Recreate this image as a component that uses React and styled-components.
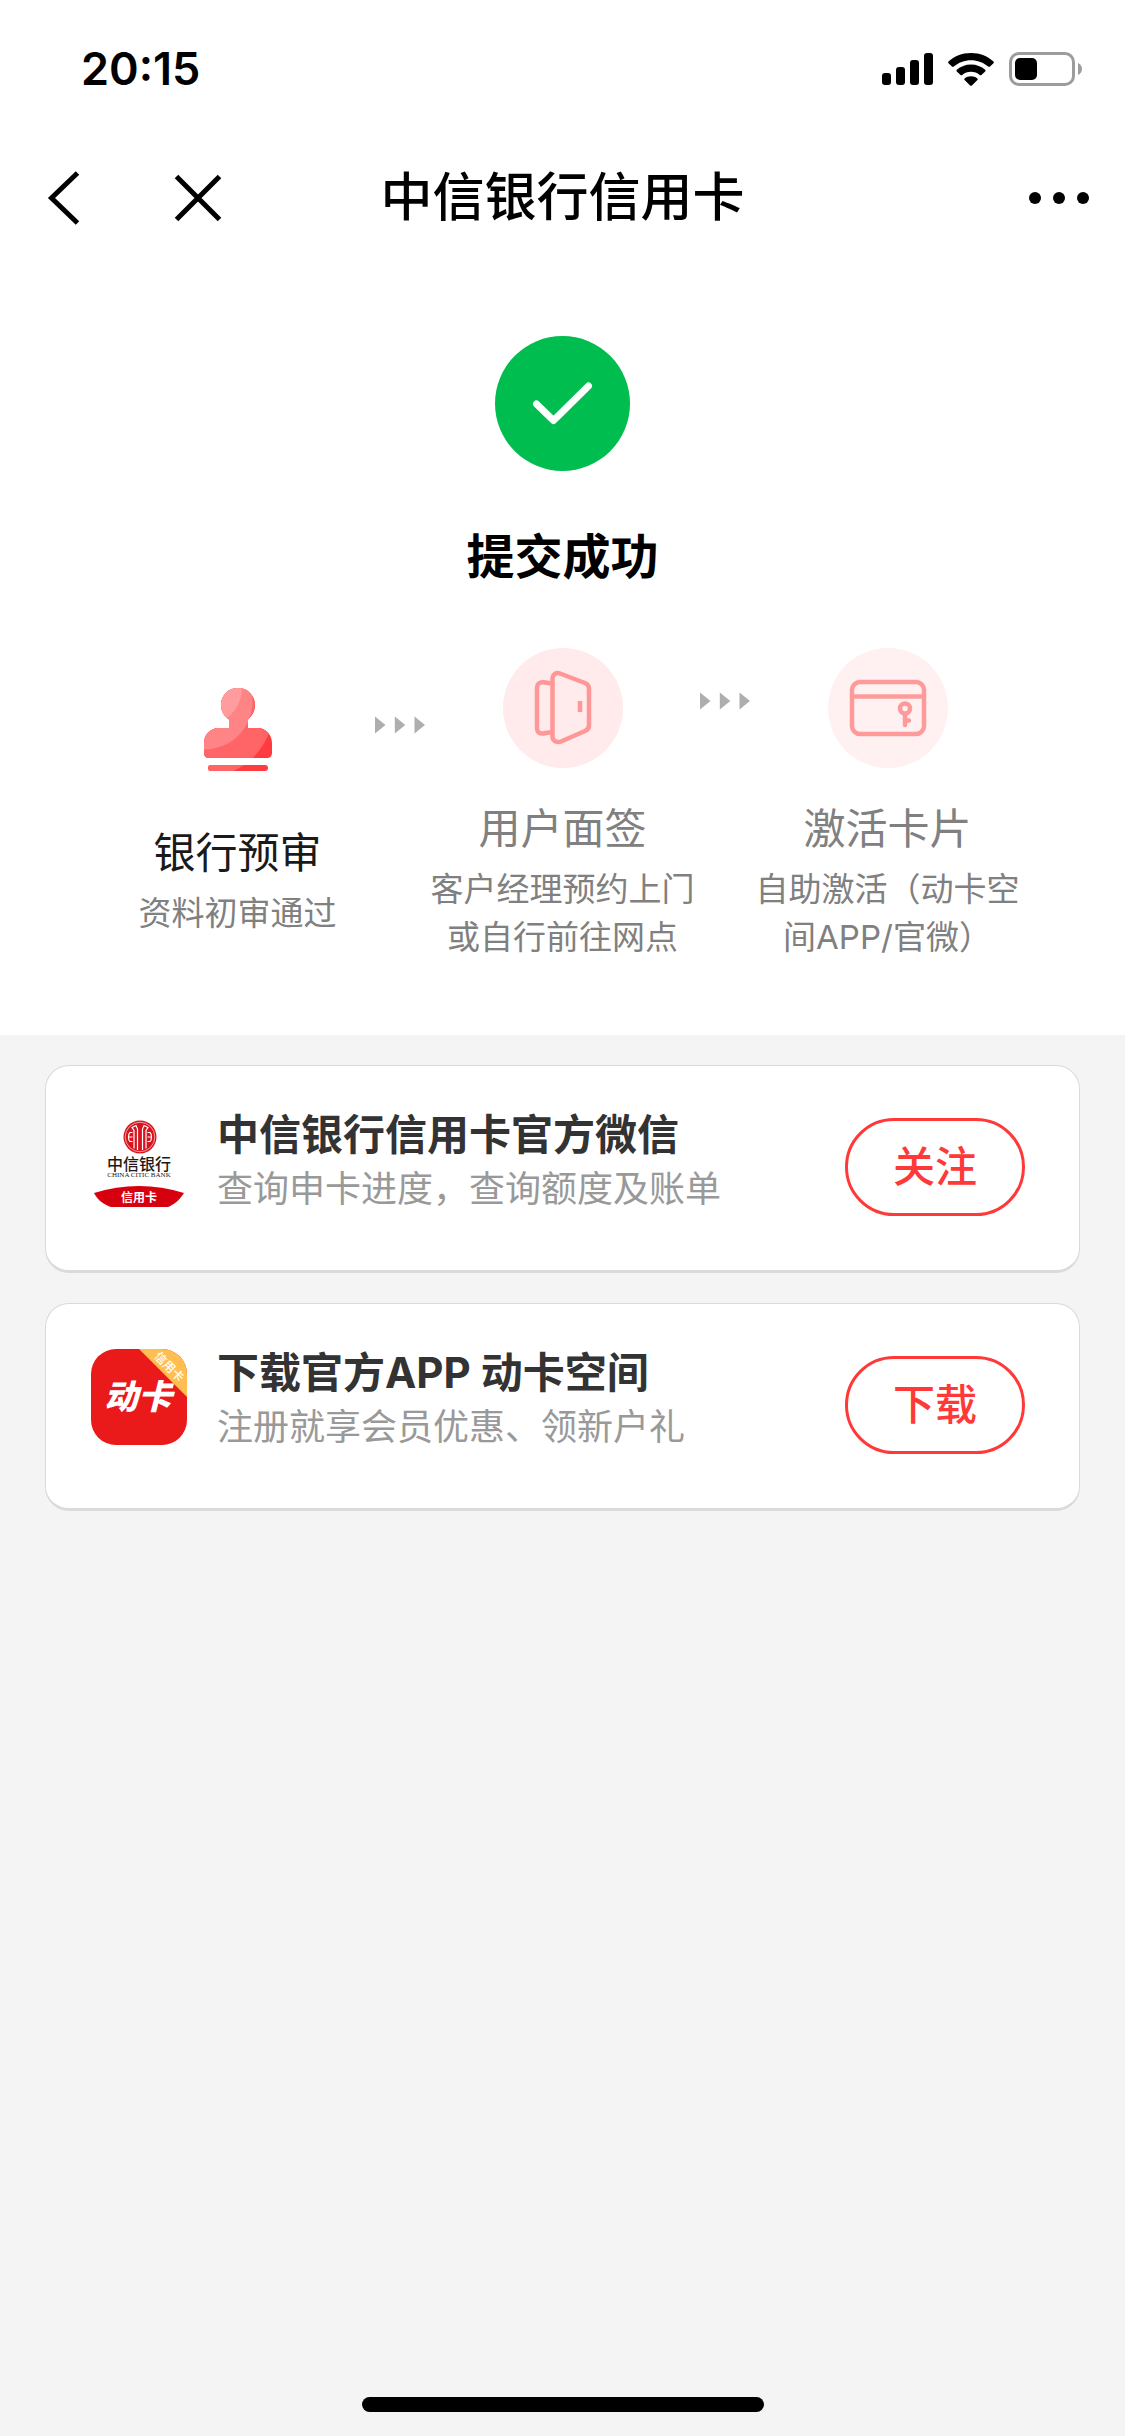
import React from 'react';
import styled, { createGlobalStyle } from 'styled-components';

const GlobalStyle = createGlobalStyle`
    * {
        box-sizing: border-box;
    }
    body {
        margin: 0;
        background-color: #f4f4f4;
        font-family: Inter, "Noto Sans CJK SC", sans-serif;
    }
    h1, h2, h3, p, ul {
        margin: 0;
        padding: 0;
    }
    button {
        font-family: inherit;
        padding: 0;
        background: none;
        border: none;
        cursor: pointer;
    }
    svg {
        display: block;
        flex-shrink: 0;
    }
`

const Page = styled.div`
    display: flex;
    flex-direction: column;
    min-height: 100vh;
`

const StatusBar = styled.div`
    display: flex;
    justify-content: space-between;
    align-items: center;
    height: 138px;
    padding: 0 43px 0 81px;
    background-color: #fff;
`

const Clock = styled.span`
    font-size: 45px;
    line-height: 60px;
    font-weight: 600;
    color: #000;
`

const StatusIcons = styled.div`
    display: flex;
    align-items: center;
    gap: 15px;
`

const NavBar = styled.header`
    display: grid;
    grid-template-columns: 1fr auto 1fr;
    align-items: center;
    height: 120px;
    padding: 0 36px;
    background-color: #fff;
`

const NavActions = styled.div`
    display: flex;
    align-items: center;
    justify-content: ${props => props.$end ? 'flex-end' : 'flex-start'};
    gap: 91px;
`

const NavTitle = styled.h1`
    font-size: 52px;
    line-height: 72px;
    font-weight: 500;
    color: #000;
`

const Result = styled.section`
    display: flex;
    flex-direction: column;
    align-items: center;
    padding: 78px 100px 74px;
    background-color: #fff;
`

const ResultTitle = styled.h2`
    margin-top: 50px;
    font-size: 48px;
    line-height: 72px;
    font-weight: 700;
    color: #000;
`

const Steps = styled.ul`
    display: grid;
    grid-template-columns: 13fr 13fr 11fr;
    align-items: center;
    width: 100%;
    margin-top: 55px;
    list-style: none;
`

const Step = styled.li`
    display: flex;
    align-items: flex-start;
`

const StepBody = styled.div`
    flex: 1;
    display: flex;
    flex-direction: column;
    align-items: center;
    text-align: center;
`

const StepTitle = styled.h3`
    margin-top: 31px;
    font-size: 42px;
    line-height: 60px;
    font-weight: 400;
    color: ${props => props.$active ? '#1a1a1a' : '#808080'};
`

const StepText = styled.p`
    margin-top: 6px;
    font-size: 33px;
    line-height: 48px;
    color: #808080;
`

const StepArrow = styled.div`
    padding-top: 44px;
`

const Cards = styled.main`
    display: flex;
    flex-direction: column;
    gap: 30px;
    padding: 30px 45px;
`

const Card = styled.article`
    display: flex;
    align-items: center;
    gap: 30px;
    padding: 36px 54px 54px 45px;
    background-color: #fff;
    border: 1px solid #dadada;
    border-bottom-width: 3px;
    border-radius: 24px;
`

const CardBody = styled.div`
    flex: 1;
`

const CardTitle = styled.h3`
    font-size: 42px;
    line-height: 60px;
    font-weight: 700;
    color: #333;
`

const CardText = styled.p`
    font-size: 36px;
    line-height: 48px;
    color: #999;
`

const CardButton = styled.button`
    width: 180px;
    height: 98px;
    margin-top: 16px;
    border: 3px solid #ff3838;
    border-radius: 50px;
    font-size: 42px;
    line-height: 60px;
    font-weight: 500;
    color: #ff3838;
`

const HomeIndicator = styled.div`
    width: 402px;
    height: 15px;
    margin: auto auto 24px;
    border-radius: 8px;
    background-color: #000;
`

const IconSignal = () => (
    <svg width="51" height="32" viewBox="0 0 51 32">
        <rect x="0" y="20" width="9" height="12" rx="3" />
        <rect x="14" y="14" width="9" height="18" rx="3" />
        <rect x="28" y="7" width="9" height="25" rx="3" />
        <rect x="42" y="0" width="9" height="32" rx="3" />
    </svg>
)

const IconWifi = () => (
    <svg width="46" height="33" viewBox="0 0 46 35.500" preserveAspectRatio="none">
        <path d="M23 0C32 0 40 3.500 45.500 9.200C46 9.800 46 10.500 45.500 11L42 14.600C41.500 15.100 40.800 15.100 40.200 14.600C35.600 10.300 29.500 7.800 23 7.800S10.400 10.300 5.800 14.600C5.200 15.100 4.500 15.100 4 14.600L0.500 11C0 10.500 0 9.800 0.500 9.200C6 3.500 14 0 23 0Z" />
        <path d="M23 12.300C28.500 12.300 33.400 14.400 37.200 18C37.700 18.500 37.700 19.300 37.200 19.800L33.400 23.600C33 24 32.200 24 31.700 23.600C29.400 21.500 26.300 20.200 23 20.200S16.600 21.500 14.300 23.600C13.800 24 13 24 12.600 23.600L8.800 19.800C8.300 19.300 8.300 18.500 8.800 18C12.600 14.400 17.500 12.300 23 12.300Z" />
        <path d="M23 25C25.500 25 27.700 25.900 29.400 27.400C29.900 27.900 29.900 28.600 29.400 29.100L23.900 34.900C23.400 35.400 22.600 35.400 22.100 34.900L16.600 29.100C16.100 28.600 16.100 27.900 16.600 27.400C18.300 25.900 20.500 25 23 25Z" />
    </svg>
)

const IconBattery = () => (
    <svg width="73" height="34" viewBox="0 0 73 34">
        <rect x="1.500" y="1.500" width="63" height="31" rx="8.500" fill="none" stroke="#9c9c9c" strokeWidth="3" />
        <rect x="6" y="6" width="22" height="22" rx="5" />
        <path d="M69 11C71.500 12 73 14.500 73 17S71.500 22 69 23Z" fill="#9c9c9c" />
    </svg>
)

const IconBack = () => (
    <svg width="46" height="54" viewBox="0 0 46 54">
        <path d="M41.500 2L15.500 27L41.500 52" fill="none" stroke="#000" strokeWidth="5" />
    </svg>
)

const IconClose = () => (
    <svg width="50" height="50" viewBox="0 0 50 50">
        <path d="M3.500 3.500L46.500 46.500M46.500 3.500L3.500 46.500" fill="none" stroke="#000" strokeWidth="5" />
    </svg>
)

const IconMore = () => (
    <svg width="60" height="12" viewBox="0 0 60 12">
        <circle cx="6" cy="6" r="6" />
        <circle cx="30" cy="6" r="6" />
        <circle cx="54" cy="6" r="6" />
    </svg>
)

const IconSuccess = () => (
    <svg width="135" height="135" viewBox="0 0 135 135">
        <circle cx="67.500" cy="67.500" r="67.500" fill="#00bd50" />
        <path d="M41.500 68L58.500 84.500L93.500 50" fill="none" stroke="#fff" strokeWidth="7" strokeLinecap="round" strokeLinejoin="round" />
    </svg>
)

const IconStamp = () => (
    <svg width="120" height="120" viewBox="0 0 120 120">
        <clipPath id="stamp">
            <path d="M60 16C69.500 16 77 23.500 77 33C77 39 74 44 70 47.500V56H80C88 56 94 63 94 71V81C94 84 92 86 89 86H31C28 86 26 84 26 81V71C26 63 32 56 41 56H51V47.500C46 44 43 39 43 33C43 23.500 50.500 16 60 16Z" />
            <rect x="30" y="93" width="60" height="6" rx="3" />
        </clipPath>
        <g clipPath="url(#stamp)">
            <rect width="120" height="120" fill="#ff3b3f" />
            <circle cx="26.500" cy="36.500" r="69" fill="#ff6467" />
            <circle cx="26.500" cy="29.500" r="48" fill="#ff8486" />
            <circle cx="26" cy="16" r="38" fill="#ff9c9d" />
        </g>
    </svg>
)

const IconDoor = () => (
    <svg width="120" height="120" viewBox="0 0 120 120">
        <circle cx="60" cy="60" r="60" fill="#ffebeb" />
        <g fill="none" stroke="#ff9697" strokeWidth="4.500">
            <path d="M49.500 31C49.500 26.500 53 24 57 25.500L82 35C85 36.200 86 38 86 41V77C86 80 85 81.800 82 83L58 93.500C54 95.200 49.500 93 49.500 88.500Z" />
            <path d="M49 35.500L40.500 34.200C36.500 33.800 34 36 34 39.500V80C34 84 36.500 86 40.500 85.500L49 84" />
            <path d="M77 53V64" />
        </g>
    </svg>
)

const IconCardKey = () => (
    <svg width="120" height="120" viewBox="0 0 120 120">
        <circle cx="60" cy="60" r="60" fill="#fff1f1" />
        <g fill="none" stroke="#ff9a9b" strokeWidth="4.500">
            <rect x="24" y="34" width="72" height="52" rx="8" />
            <path d="M24 48.500H96" />
            <circle cx="77" cy="60.500" r="5" />
            <path d="M77 66V77M77 72.500H81" strokeLinecap="round" />
        </g>
    </svg>
)

const IconArrows = () => (
    <svg width="50" height="18" viewBox="0 0 50 18" fill="#aeaeae">
        <path d="M0 0.500L10.500 9L0 17.500Z" />
        <path d="M19.800 0.500L30.300 9L19.800 17.500Z" />
        <path d="M39.500 0.500L50 9L39.500 17.500Z" />
    </svg>
)

const LogoCitic = () => (
    <svg width="96" height="96" viewBox="0 0 96 96">
        <circle cx="49" cy="26" r="16.500" fill="#d8141e" />
        <circle cx="49" cy="26" r="14.800" fill="none" stroke="#fff" strokeWidth="0.600" />
        <g fill="none" stroke="#fff" strokeWidth="1.200">
            <path d="M43 37.500V19.500L41 16.500L45 14.500L46.500 18V39M55 37.500V19.500L57 16.500L53 14.500L51.500 18V39" />
            <path d="M41.500 21.500H39C37 23 37 29 39 30.500H41.500M56.500 21.500H59C61 23 61 29 59 30.500H56.500M37.500 26H41.500M56.500 26H60.500" />
        </g>
        <text x="48" y="59" textAnchor="middle" fontSize="16" fontWeight="500" fill="#231815">中信银行</text>
        <text x="48" y="66" textAnchor="middle" fontFamily="Liberation Serif, serif" fontSize="7" fill="#231815">CHINA CITIC BANK</text>
        <path d="M3 82Q48 68 93 82C88 90 82 94 77 96H20C14 94 7 90 3 82Z" fill="#d7000f" />
        <text x="48" y="91" textAnchor="middle" fontSize="12" fontWeight="700" fill="#fff">信用卡</text>
    </svg>
)

const LogoDongka = () => (
    <svg width="96" height="96" viewBox="0 0 96 96">
        <clipPath id="dongka">
            <rect width="96" height="96" rx="25" />
        </clipPath>
        <g clipPath="url(#dongka)">
            <rect width="96" height="96" fill="#ea191a" />
            <path d="M48 0H96V48Z" fill="#ffbf50" />
        </g>
        <text x="47" y="60" textAnchor="middle" fontSize="34" fontWeight="900" fontStyle="italic" fill="#fff">动卡</text>
        <text transform="translate(78 18) rotate(45)" y="4" textAnchor="middle" fontSize="12" fontWeight="500" fill="#fff">信用卡</text>
    </svg>
)

const steps = [
    { title: '银行预审', lines: ['资料初审通过'], icon: <IconStamp />, active: true },
    { title: '用户面签', lines: ['客户经理预约上门', '或自行前往网点'], icon: <IconDoor /> },
    { title: '激活卡片', lines: ['自助激活（动卡空', '间APP/官微）'], icon: <IconCardKey /> },
];

const cards = [
    { title: '中信银行信用卡官方微信', text: '查询申卡进度，查询额度及账单', action: '关注', logo: <LogoCitic /> },
    { title: '下载官方APP 动卡空间', text: '注册就享会员优惠、领新户礼', action: '下载', logo: <LogoDongka /> },
];

const App = () => {
    return (
        <Page>
            <GlobalStyle />
            <StatusBar>
                <Clock>20:15</Clock>
                <StatusIcons>
                    <IconSignal />
                    <IconWifi />
                    <IconBattery />
                </StatusIcons>
            </StatusBar>
            <NavBar>
                <NavActions>
                    <button type="button" aria-label="返回"><IconBack /></button>
                    <button type="button" aria-label="关闭"><IconClose /></button>
                </NavActions>
                <NavTitle>中信银行信用卡</NavTitle>
                <NavActions $end>
                    <button type="button" aria-label="更多"><IconMore /></button>
                </NavActions>
            </NavBar>
            <Result>
                <IconSuccess />
                <ResultTitle>提交成功</ResultTitle>
                <Steps>
                    {steps.map((step, index) => (
                        <Step key={step.title}>
                            <StepBody>
                                {step.icon}
                                <StepTitle $active={step.active}>{step.title}</StepTitle>
                                <StepText>
                                    {step.lines.map((line, i) => (
                                        <React.Fragment key={line}>
                                            {i > 0 && <br />}
                                            {line}
                                        </React.Fragment>
                                    ))}
                                </StepText>
                            </StepBody>
                            {index < steps.length - 1 && <StepArrow><IconArrows /></StepArrow>}
                        </Step>
                    ))}
                </Steps>
            </Result>
            <Cards>
                {cards.map((card) => (
                    <Card key={card.title}>
                        {card.logo}
                        <CardBody>
                            <CardTitle>{card.title}</CardTitle>
                            <CardText>{card.text}</CardText>
                        </CardBody>
                        <CardButton type="button">{card.action}</CardButton>
                    </Card>
                ))}
            </Cards>
            <HomeIndicator />
        </Page>
    );
};

export default App;
